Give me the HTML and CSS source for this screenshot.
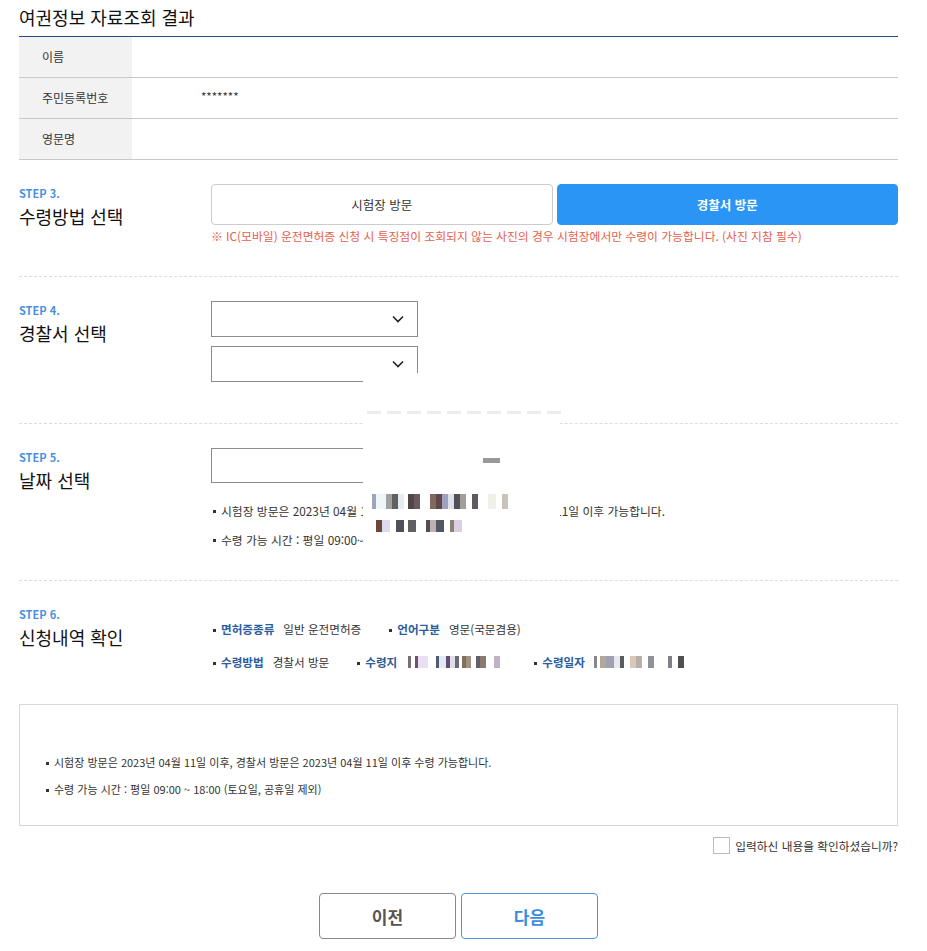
FILE: index.html
```html
<!DOCTYPE html>
<html lang="ko">
<head>
  <meta charset="UTF-8" />
  <meta name="viewport" content="width=device-width, initial-scale=1.0" />
  <title>여권정보 자료조회 결과</title>
  <link rel="stylesheet" href="styles.css">
</head>
<body>
  <div class="page">
    <h2 class="page-title">여권정보 자료조회 결과</h2>

    <div class="info-table">
      <div class="info-row">
        <div class="info-label">이름</div>
        <div class="info-value"></div>
      </div>
      <div class="info-row">
        <div class="info-label">주민등록번호</div>
        <div class="info-value"><span class="masked">*******</span></div>
      </div>
      <div class="info-row">
        <div class="info-label">영문명</div>
        <div class="info-value"></div>
      </div>
    </div>

    <div class="step step-3">
      <div class="step-head">
        <span class="step-num">STEP 3.</span>
        <h3>수령방법 선택</h3>
      </div>
      <div class="step-body">
        <div class="choice">
          <button class="choice-btn">시험장 방문</button>
          <button class="choice-btn active">경찰서 방문</button>
        </div>
        <p class="warn">※ IC(모바일) 운전면허증 신청 시 특징점이 조회되지 않는 사진의 경우 시험장에서만 수령이 가능합니다. (사진 지참 필수)</p>
      </div>
    </div>

    <div class="step step-4">
      <div class="step-head">
        <span class="step-num">STEP 4.</span>
        <h3>경찰서 선택</h3>
      </div>
      <div class="step-body">
        <div class="select"><span class="select-text"></span>
          <svg class="chevron" width="12" height="8" viewBox="0 0 12 8"><path d="M1 1.5 6 6.5 11 1.5" fill="none" stroke="#222" stroke-width="1.6"/></svg>
        </div>
        <div class="select"><span class="select-text"></span>
          <svg class="chevron" width="12" height="8" viewBox="0 0 12 8"><path d="M1 1.5 6 6.5 11 1.5" fill="none" stroke="#222" stroke-width="1.6"/></svg>
        </div>
      </div>
    </div>

    <div class="step step-5">
      <div class="step-head">
        <span class="step-num">STEP 5.</span>
        <h3>날짜 선택</h3>
      </div>
      <div class="step-body">
        <div class="date-input"></div>
        <ul class="dot-list">
          <li>시험장 방문은 2023년 04월 11일 이후, 경찰서 방문은 2023년 04월 11일 이후 가능합니다.</li>
          <li>수령 가능 시간 : 평일 09:00~18:00 (토요일, 공휴일 제외)</li>
        </ul>
      </div>
    </div>

    <div class="step step-6">
      <div class="step-head">
        <span class="step-num">STEP 6.</span>
        <h3>신청내역 확인</h3>
      </div>
      <div class="step-body">
        <div class="summary">
          <span class="sum-item"><b>면허증종류</b>일반 운전면허증</span>
          <span class="sum-item"><b>언어구분</b>영문(국문겸용)</span>
        </div>
        <div class="summary">
          <span class="sum-item"><b>수령방법</b>경찰서 방문</span>
          <span class="sum-item"><b>수령지</b><span class="pix pix-place"></span></span>
          <span class="sum-item"><b>수령일자</b><span class="pix pix-date"></span></span>
        </div>
      </div>
    </div>

    <div class="notice-box">
      <ul class="dot-list">
        <li>시험장 방문은 2023년 04월 11일 이후, 경찰서 방문은 2023년 04월 11일 이후 수령 가능합니다.</li>
        <li>수령 가능 시간 : 평일 09:00 ~ 18:00 (토요일, 공휴일 제외)</li>
      </ul>
    </div>

    <label class="confirm"><span class="check"></span>입력하신 내용을 확인하셨습니까?</label>

    <div class="btn-area">
      <button class="btn-prev">이전</button>
      <button class="btn-next">다음</button>
    </div>

    <!-- masked area in the capture -->
    <div class="mask">
      <span class="pix pix-a"></span>
      <span class="pix pix-b"></span>
      <span class="pix pix-c"></span>
      <span class="pix pix-d"></span>
    </div>
  </div>
</body>
</html>
```

FILE: styles.css
```css
body {
  margin: 0;
  font-family: "Noto Sans CJK KR", "Noto Sans", sans-serif;
  color: #333;
  background: #fff;
}

.page {
  position: relative;
  width: 879px;
  margin-left: 19px;
}

.page-title {
  margin: 0;
  padding: 4px 0 6px;
  font-size: 18px;
  line-height: 26px;
  font-weight: 400;
  color: #111;
  border-bottom: 1px solid #2b4a7e;
}

.info-row {
  display: flex;
  height: 40px;
  border-bottom: 1px solid #c8c8c8;
}

.info-label {
  width: 90px;
  padding-left: 23px;
  background: #f2f2f2;
  font-size: 12px;
  line-height: 40px;
  color: #333;
}

.info-value {
  flex: 1;
  font-size: 11.5px;
  line-height: 36px;
}

.masked {
  margin-left: 69px;
}

.step {
  display: flex;
  padding-top: 24px;
  border-bottom: 1px dashed #ddd;
}

.step-3 { padding-bottom: 32px; }
.step-4 { padding-bottom: 41px; }
.step-5 { padding-bottom: 26px; }
.step-6 { padding-bottom: 26px; border-bottom: none; }

.step-head {
  width: 192px;
  padding-top: 1px;
}

.step-num {
  display: block;
  font-size: 11px;
  line-height: 16px;
  font-weight: 700;
  color: #4a90e2;
}

.step-head h3 {
  margin: 2px 0 0;
  font-size: 18px;
  line-height: 26px;
  font-weight: 400;
  color: #111;
}

.step-body {
  flex: 1;
}

.choice {
  display: flex;
  gap: 4px;
}

.choice-btn {
  flex: 1;
  height: 41px;
  border: 1px solid #ccc;
  border-radius: 4px;
  background: #fff;
  font-family: inherit;
  font-size: 12.5px;
  color: #333;
}

.choice-btn.active {
  background: #2b95f5;
  border-color: #2b95f5;
  color: #fff;
  font-weight: 700;
}

.warn {
  margin: 3px 0 0;
  font-size: 11.8px;
  line-height: 16px;
  color: #e5604d;
}

.select {
  display: flex;
  align-items: center;
  justify-content: space-between;
  box-sizing: border-box;
  width: 207px;
  height: 36px;
  padding: 0 13px;
  border: 1px solid #8c8c8c;
}

.select + .select {
  margin-top: 9px;
}

.date-input {
  box-sizing: border-box;
  width: 330px;
  height: 35px;
  border: 1px solid #8c8c8c;
}

.dot-list {
  margin: 13px 0 0;
  padding: 0;
  list-style: none;
}

.dot-list li {
  position: relative;
  padding-left: 10px;
  font-size: 11.8px;
  line-height: 29px;
  color: #333;
}

.dot-list li::before {
  content: "";
  position: absolute;
  left: 2px;
  top: 14px;
  width: 3px;
  height: 3px;
  background: #333;
}

.summary {
  display: flex;
  align-items: center;
  height: 33px;
  font-size: 11.6px;
}

.step-6 .step-body {
  padding-top: 7px;
}

.sum-item {
  position: relative;
  display: inline-flex;
  align-items: center;
  padding-left: 10px;
  margin-right: 26px;
  color: #333;
}

.sum-item::before {
  content: "";
  position: absolute;
  left: 2px;
  top: 8px;
  width: 3px;
  height: 3px;
  background: #333;
}

.sum-item b {
  margin-right: 9px;
  color: #2c5d9c;
}

.pix {
  display: inline-block;
  height: 12px;
}

.pix-place {
  width: 100px;
  background: linear-gradient(to right,
    #fff 0 2px, #7a6e70 2px 5px, #fff 5px 9px, #6a5470 9px 12px, #e8e0f0 12px 22px,
    #fff 22px 30px, #505a70 30px 33px, #e4e8f4 33px 40px, #605070 40px 44px,
    #e0dcec 44px 49px, #6a6a72 49px 53px, #fff 53px 56px, #807060 56px 60px,
    #a09080 60px 65px, #fff 65px 70px, #60606a 70px 74px, #8a7a70 74px 80px,
    #fff 80px 88px, #c0b0c8 88px 94px, #fff 94px 100px);
}

.pix-date {
  width: 96px;
  background: linear-gradient(to right,
    #888 0 3px, #fff 3px 6px, #b0a898 6px 12px, #a0a0b0 12px 20px, #e8e8f0 20px 26px,
    #5a5a60 26px 30px, #fff 30px 36px, #d8c8b8 36px 42px, #b8b0a8 42px 48px,
    #fff 48px 54px, #909098 54px 60px, #fff 60px 74px, #808088 74px 78px,
    #fff 78px 84px, #505050 84px 90px, #fff 90px 96px);
}

.notice-box {
  box-sizing: border-box;
  height: 122px;
  padding: 44px 0 0 24px;
  border: 1px solid #d8d8d8;
}

.notice-box .dot-list {
  margin: 0;
}

.notice-box .dot-list li {
  font-size: 11px;
  line-height: 27px;
}

.notice-box .dot-list li::before {
  top: 13px;
}

.confirm {
  display: flex;
  justify-content: flex-end;
  align-items: center;
  margin-top: 11px;
  font-size: 11.7px;
  line-height: 17px;
  color: #333;
}

.check {
  box-sizing: border-box;
  width: 17px;
  height: 17px;
  margin-right: 5px;
  border: 1px solid #bbb;
  background: #fff;
}

.btn-area {
  display: flex;
  justify-content: center;
  gap: 5px;
  margin-top: 39px;
}

.btn-area button {
  width: 137px;
  height: 46px;
  border-radius: 4px;
  background: #fff;
  font-family: inherit;
  font-size: 17px;
  font-weight: 700;
}

.btn-prev {
  border: 1px solid #888;
  color: #555;
}

.btn-next {
  border: 1px solid #4a94e0;
  color: #3a8ee0;
}

.mask {
  position: absolute;
  left: 344px;
  top: 373px;
  width: 197px;
  height: 207px;
  background: #fff;
}

.mask .pix {
  position: absolute;
}

.pix-a {
  left: 4px;
  top: 38px;
  width: 197px;
  height: 3px;
  background: repeating-linear-gradient(to right, #ececec 0 14px, #fff 14px 20px);
}

.pix-b {
  left: 120px;
  top: 85px;
  width: 17px;
  height: 5px;
  background: #999;
}

.pix-c {
  left: 9px;
  top: 121px;
  width: 188px;
  height: 15px;
  background: linear-gradient(to right,
    #a0a4b8 0 4px, #eef6fa 4px 14px, #a0a0a0 14px 20px, #606060 20px 26px, #e8ecf0 26px 32px,
    #fff 32px 36px, #504848 36px 42px, #6a5a60 42px 48px, #fff 48px 58px,
    #806a60 58px 64px, #604848 64px 70px, #a0a0c0 70px 76px, #e0e0e8 76px 82px,
    #505058 82px 88px, #a0a098 88px 94px, #fff 94px 100px, #605a60 100px 106px,
    #fff 106px 116px, #f0f0e8 116px 124px, #fff 124px 130px, #c8c4b8 130px 136px,
    #fff 136px 188px);
}

.pix-d {
  left: 5px;
  top: 147px;
  width: 147px;
  height: 12px;
  background: linear-gradient(to right,
    #fff 0 8px, #6a4838 8px 14px, #e0d8f0 14px 22px, #fff 22px 28px,
    #505058 28px 36px, #fff 36px 40px, #606060 40px 48px, #fff 48px 58px,
    #505050 58px 62px, #c0b0b0 62px 68px, #505860 68px 76px, #fff 76px 82px,
    #908070 82px 86px, #d8d0e0 86px 94px, #fff 94px 147px);
}
```
